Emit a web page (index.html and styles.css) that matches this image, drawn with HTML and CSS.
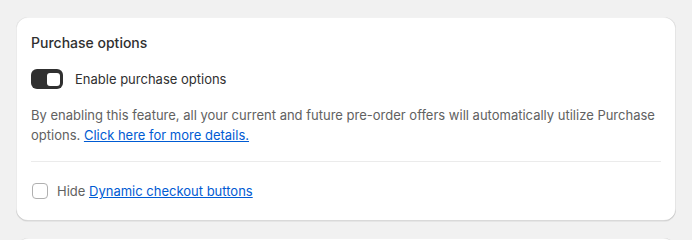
FILE: index.html
```html
<!DOCTYPE html>
<html lang="en">
<head>
<meta charset="utf-8">
<title>Purchase options</title>
<link rel="stylesheet" href="styles.css">
</head>
<body>
<main class="page">
  <section class="card">
    <div class="card-top">
      <h2 class="title">Purchase options</h2>
      <label class="toggle-row">
        <span class="toggle"><span class="knob"></span></span>
        <span class="toggle-label">Enable purchase options</span>
      </label>
      <p class="desc">By enabling this feature, all your current and future pre-order offers will automatically utilize Purchase options. <a href="#" class="link">Click here for more details.</a></p>
    </div>
    <div class="card-bottom">
      <label class="check-row">
        <span class="checkbox"></span>
        <span class="check-label">Hide <a href="#" class="link">Dynamic checkout buttons</a></span>
      </label>
    </div>
  </section>
  <section class="card card-next"></section>
</main>
</body>
</html>
```

FILE: styles.css
```css
* { box-sizing: border-box; }
html, body { margin: 0; padding: 0; background: #f1f1f1; overflow: hidden; }
body {
  font-family: Inter, "Noto Sans", sans-serif;
  font-size: 13px;
  line-height: 20px;
  color: #303030;
}
.page {
  height: 240px;
  overflow: hidden;
  padding: 17px 16px 0 16px;
  display: flex;
  flex-direction: column;
  gap: 17px;
}
.card {
  flex-shrink: 0;
  background: #ffffff;
  border-radius: 12px;
  box-shadow: inset 1px 0 0 rgba(0,0,0,0.08), inset -1px 0 0 rgba(0,0,0,0.1), inset 0 -1px 0 rgba(0,0,0,0.15), inset 0 1px 0 rgba(0,0,0,0.05), 0 1px 0 rgba(26,26,26,0.05);
}
.card-next { height: 40px; }
.card-top {
  padding: 16px 15px 16px 15px;
  display: flex;
  flex-direction: column;
  gap: 16px;
}
.title {
  margin: 0;
  font-size: 14px;
  line-height: 20px;
  font-weight: 550;
  color: #303030;
}
.toggle-row {
  display: flex;
  align-items: center;
  gap: 12px;
}
.toggle {
  width: 32px;
  height: 20px;
  border-radius: 6px;
  background: #303030;
  display: flex;
  align-items: center;
  justify-content: flex-end;
  padding-right: 3px;
}
.knob {
  width: 13px;
  height: 13px;
  border-radius: 3px;
  background: #ffffff;
}
.toggle-label { color: #303030; }
.desc {
  margin: 0;
  color: #616161;
}
.link {
  color: #005bd3;
  text-decoration: underline;
}
.card-bottom {
  margin: 0 15px;
  border-top: 1px solid #ebebeb;
  padding: 19px 0 20px;
}
.check-row {
  display: flex;
  align-items: center;
  gap: 9px;
  height: 20px;
  padding-left: 1px;
}
.checkbox {
  width: 16px;
  height: 16px;
  border: 1px solid #b0b0b0;
  border-radius: 4px;
  background: #fff;
}
.check-label { color: #616161; }
```
